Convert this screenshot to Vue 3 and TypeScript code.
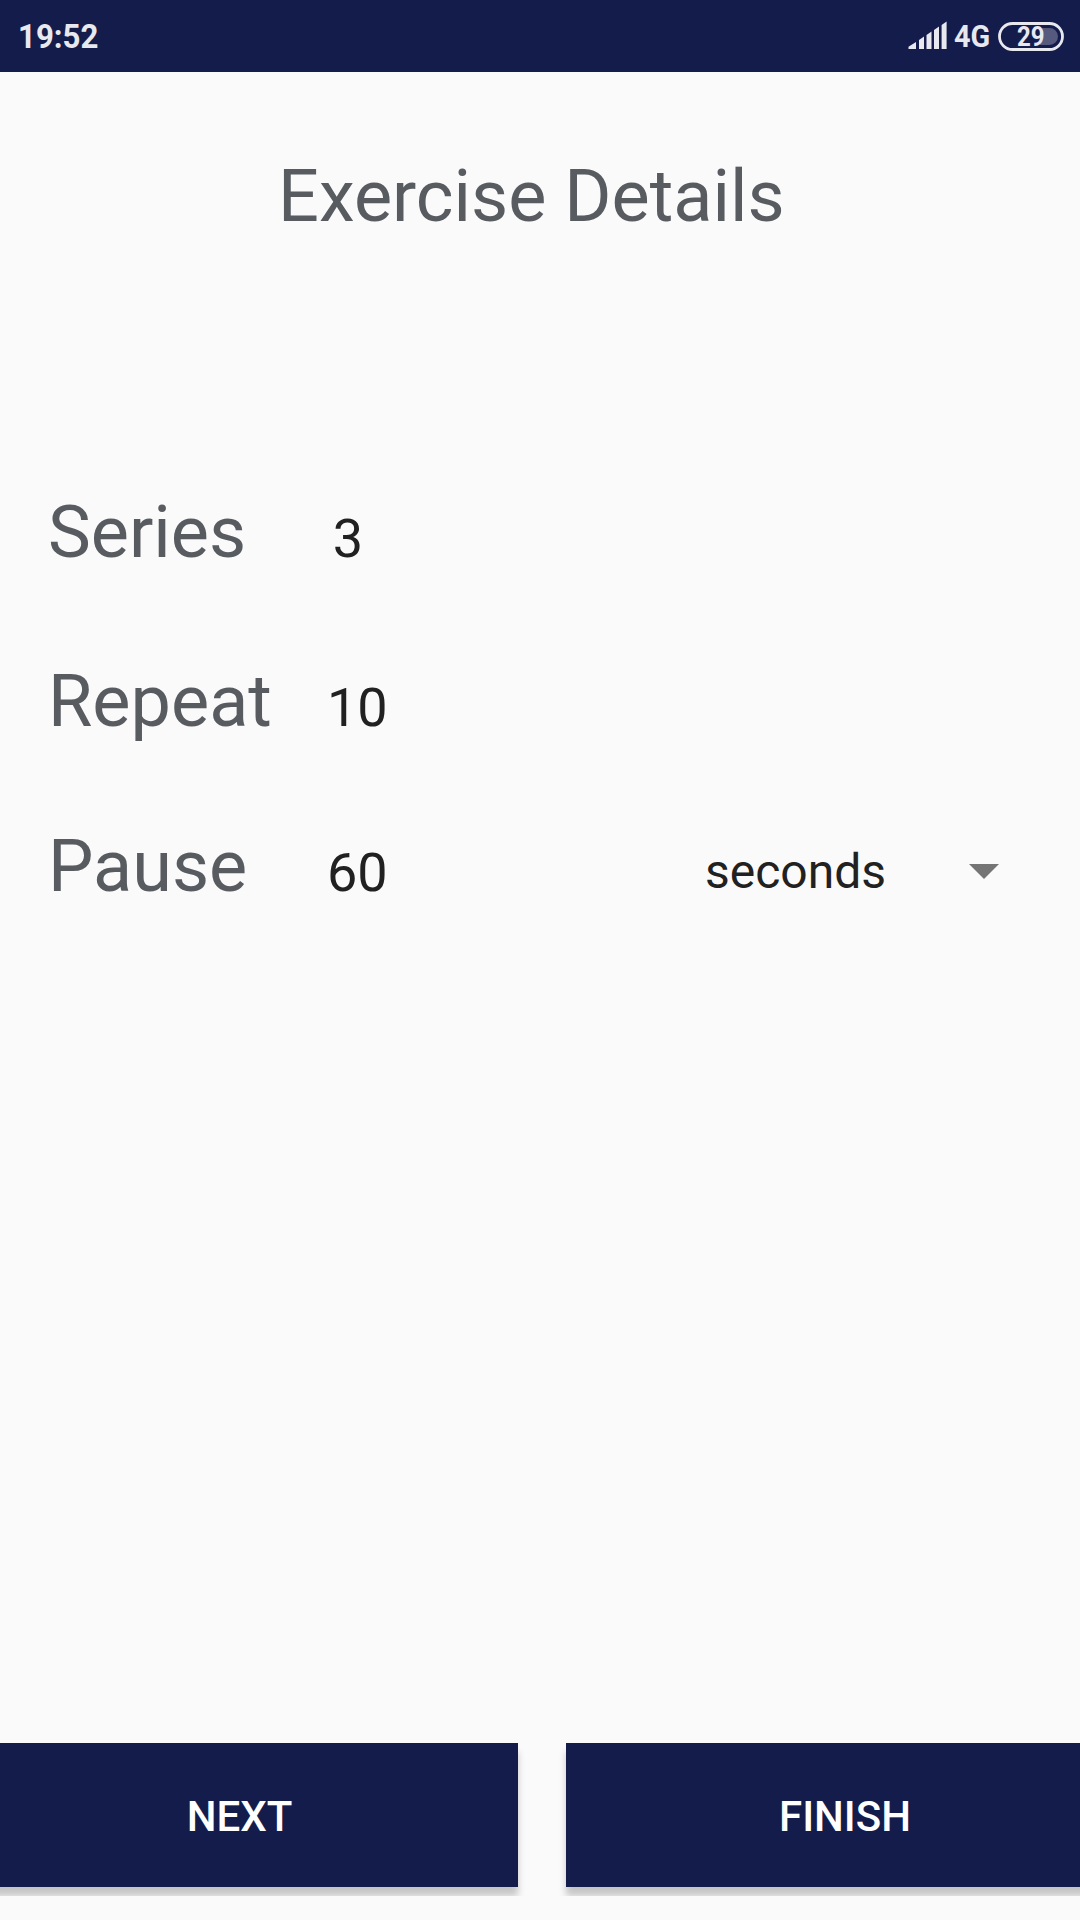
<script setup lang="ts">
interface Field {
  id: string
  label: string
  value: string
  unit?: string
}

const title = 'Exercise Details'
const fields: Field[] = [
  { id: 'series', label: 'Series', value: '3' },
  { id: 'repeat', label: 'Repeat', value: '10' },
  { id: 'pause', label: 'Pause', value: '60', unit: 'seconds' },
]
</script>

<template>
  <div class="screen">
    <header class="status">
      <span class="clock">19:52</span>
      <svg class="signal" width="40" height="30" viewBox="0 0 40 30" fill="#e8e8ef">
        <path d="M0.5 28V25.8L8 21V28Z" />
        <path d="M11 28V19L16 15.5V28Z" />
        <path d="M18.5 28V14L23.5 10.5V28Z" />
        <path d="M26 28V9L31 5.5V28Z" />
        <path d="M33.6 28V4L38.6 0.5V28Z" />
      </svg>
      <span class="network">4G</span>
      <span class="battery">
        <svg width="66" height="29" viewBox="0 0 66 29" fill="none">
          <rect x="1.5" y="1.5" width="63" height="26" rx="13" stroke="#e8e8ef" stroke-width="2.8" />
          <path d="M44 6H51.5A8.5 8.5 0 0 1 51.5 23H42Z" fill="#555a7e" />
        </svg>
        <span class="level">29</span>
      </span>
    </header>

    <h1 class="title">{{ title }}</h1>

    <main class="form">
      <div v-for="field in fields" :key="field.id" class="row" :class="field.id">
        <label class="label">{{ field.label }}</label>
        <span class="value">{{ field.value }}</span>
        <span v-if="field.unit" class="unit">
          <span class="unit-text">{{ field.unit }}</span>
          <svg width="30" height="15" viewBox="0 0 30 15"><path d="M0 0H30L15 15Z" fill="#757575" /></svg>
        </span>
      </div>
    </main>

    <footer class="actions">
      <button class="action next" type="button">NEXT</button>
      <button class="action finish" type="button">FINISH</button>
    </footer>
  </div>
</template>

<style>
body {
  margin: 0;
}
</style>

<style scoped>
.screen {
  display: flex;
  flex-direction: column;
  width: 1080px;
  height: 1920px;
  overflow: hidden;
  background: #fafafa;
  font-family: Roboto, sans-serif;
  color: #212121;
}

.status {
  display: flex;
  flex: none;
  align-items: center;
  box-sizing: border-box;
  height: 72px;
  padding: 0 16px 0 18px;
  background: #141c4c;
  color: #e8e8ef;
  font-weight: 700;
}

.clock {
  margin-right: auto;
  padding-top: 2px;
  font-size: 33px;
  line-height: 40px;
  transform: scaleX(0.945);
  transform-origin: left;
}

.signal {
  margin-right: 6px;
}

.network {
  width: 38px;
  margin-right: 6px;
  padding-top: 2px;
  font-size: 31px;
  line-height: 40px;
  transform: scaleX(0.93);
  transform-origin: left;
}

.battery {
  display: grid;
  width: 66px;
  height: 29px;
}

.battery > * {
  grid-area: 1 / 1;
}

.level {
  margin-left: 19px;
  font-size: 27px;
  line-height: 30px;
  transform: scaleX(0.89);
  transform-origin: left;
}

.title {
  flex: none;
  margin: 83px 0 0 278px;
  font-size: 72px;
  font-weight: 400;
  line-height: 84px;
  color: #585c60;
  white-space: nowrap;
}

.form {
  flex: 1;
  padding: 252px 0 0 48px;
}

.row {
  display: flex;
  align-items: baseline;
  height: 84px;
  margin-bottom: 85px;
}

.row.repeat {
  margin-bottom: 81px;
}

.label {
  width: 279px;
  font-size: 72px;
  line-height: 84px;
  color: #585c60;
}

.value {
  width: 60px;
  font-size: 54px;
  line-height: 64px;
  text-align: center;
}

.series .value {
  width: 42px;
}

.unit {
  display: flex;
  align-self: flex-start;
  align-items: center;
  margin: 19px 0 0 318px;
}

.unit svg {
  margin-top: -2px;
}

.unit-text {
  width: 264px;
  font-size: 48px;
  line-height: 56px;
}

.actions {
  display: flex;
  flex: none;
  gap: 48px;
  height: 153px;
  margin-bottom: 24px;
  overflow: hidden;
}

.action {
  flex: none;
  box-sizing: border-box;
  height: 144px;
  padding: 4px 0 0;
  border: 0;
  background: #141c4c;
  box-shadow: 0 9px 7px rgba(0, 0, 0, 0.21);
  font-family: inherit;
  font-size: 42px;
  font-weight: 500;
  line-height: 50px;
  color: #fff;
}

.next {
  width: 554px;
  margin-left: -36px;
  padding-right: 3px;
}

.finish {
  width: 558px;
}
</style>
